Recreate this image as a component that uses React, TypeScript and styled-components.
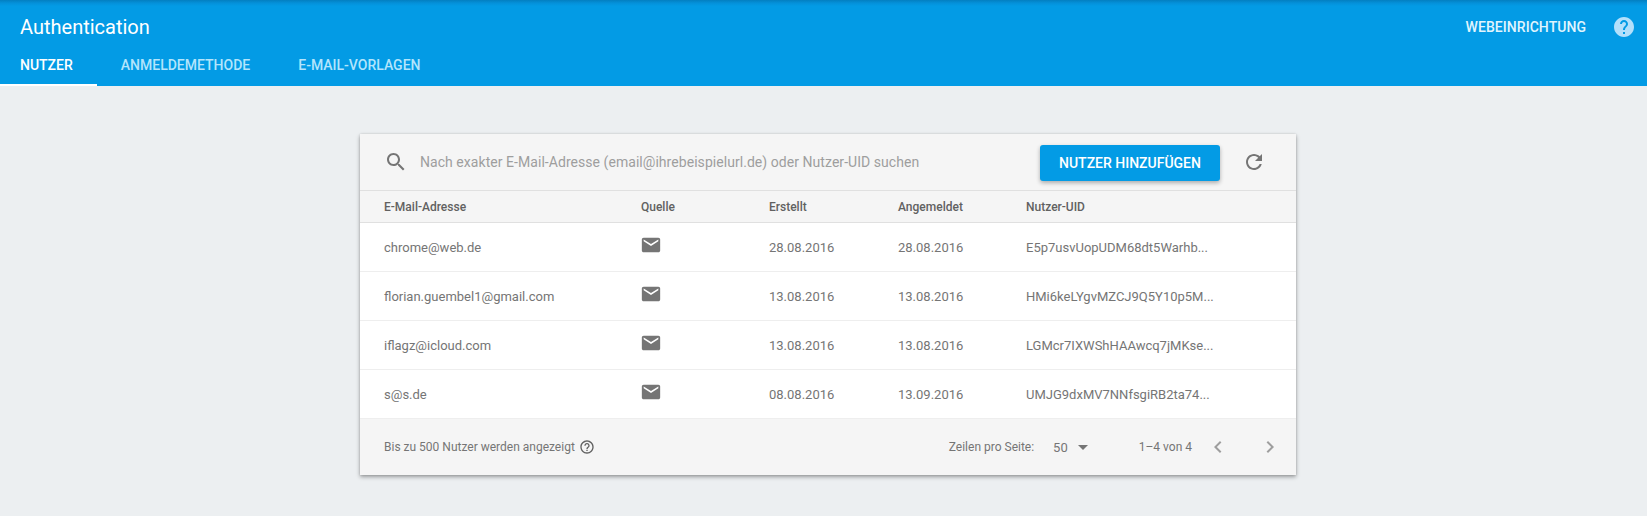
import React from "react";
import styled, { createGlobalStyle } from "styled-components";

const GlobalStyle = createGlobalStyle`
  html, body {
    margin: 0;
    padding: 0;
    background: #eceff1;
    font-family: Roboto, "Liberation Sans", sans-serif;
  }
`;

const Page = styled.div`
  width: 1647px;
  height: 516px;
  overflow: hidden;
`;

const Header = styled.header`
  height: 86px;
  box-sizing: border-box;
  background: linear-gradient(#037fc0 0, #0490d9 3px, #039be5 6px);
  display: flex;
  flex-direction: column;
  justify-content: space-between;
`;

const TopRow = styled.div`
  height: 48px;
  padding: 6px 11px 0 20px;
  box-sizing: border-box;
  display: flex;
  align-items: center;
  justify-content: space-between;
`;

const Title = styled.h1`
  margin: 0;
  font-size: 20px;
  font-weight: 400;
  color: #fff;
`;

const TopActions = styled.div`
  display: flex;
  align-items: center;
  gap: 26px;
`;

const SetupLink = styled.a`
  font-size: 14px;
  font-weight: 500;
  letter-spacing: 0.05px;
  color: #e1f5fe;
`;

const Tabs = styled.nav`
  display: flex;
`;

const Tab = styled.a<{ $active?: boolean }>`
  height: 38px;
  padding: 0 24px 2px ${(p) => (p.$active ? "20px" : "24px")};
  box-sizing: border-box;
  display: flex;
  align-items: center;
  font-size: 14px;
  font-weight: 500;
  color: ${(p) => (p.$active ? "#fff" : "#b3e5fc")};
  border-bottom: 2px solid ${(p) => (p.$active ? "#fff" : "transparent")};
`;

const Main = styled.main`
  display: flex;
  justify-content: center;
  padding-top: 48px;
  padding-left: 9px;
`;

const Card = styled.section`
  width: 936px;
  background: #fff;
  box-shadow: 0 2px 4px rgba(0, 0, 0, 0.35), 0 0 2px rgba(0, 0, 0, 0.12);
`;

const Toolbar = styled.div`
  height: 56px;
  background: #f5f5f5;
  display: flex;
  align-items: center;
  padding: 0 30px 0 24px;
  border-bottom: 1px solid #e0e0e0;
`;

const SearchText = styled.span`
  flex: 1;
  margin-left: 12px;
  font-size: 14px;
  letter-spacing: 0.05px;
  color: #9e9e9e;
`;

const AddButton = styled.button`
  width: 180px;
  height: 36px;
  margin-top: 2px;
  border: 0;
  border-radius: 3px;
  background: #039be5;
  color: #fff;
  font-family: inherit;
  font-size: 14px;
  font-weight: 500;
  box-shadow: 0 2px 4px rgba(0, 0, 0, 0.3);
`;

const RefreshSlot = styled.div`
  width: 24px;
  height: 24px;
  margin-left: 22px;
  display: flex;
`;

const columns = "257px 128px 129px 128px 1fr";

const HeadRow = styled.div`
  height: 31px;
  padding-left: 24px;
  background: #f5f5f5;
  border-bottom: 1px solid #e0e0e0;
  display: grid;
  grid-template-columns: ${columns};
  align-items: center;
  font-size: 12px;
  font-weight: 500;
  color: #616161;
`;

const Row = styled.div`
  height: 48px;
  padding-left: 24px;
  border-bottom: 1px solid #eeeeee;
  display: grid;
  grid-template-columns: ${columns};
  align-items: center;
  font-size: 13px;
  color: #757575;
`;

const MailCell = styled.div`
  display: flex;
  margin-top: -4px;
  margin-left: -1px;
`;

const Footer = styled.div`
  height: 56px;
  padding: 0 24px;
  background: #f5f5f5;
  display: flex;
  align-items: center;
  justify-content: space-between;
  font-size: 12px;
  color: #757575;
`;

const FooterNote = styled.div`
  display: flex;
  align-items: center;
  gap: 4px;
`;

const Pager = styled.div`
  display: flex;
  align-items: center;
`;

const PageSize = styled.span`
  margin-left: 19px;
  display: flex;
  align-items: center;
  gap: 3px;
  font-size: 13px;
`;

const PageRange = styled.span`
  margin-left: 44px;
  margin-right: 14px;
`;

const Chevron = styled.svg`
  display: block;
  margin-right: 28px;
  &:last-child {
    margin-right: -10px;
  }
`;

const users = [
  { mail: "chrome@web.de", created: "28.08.2016", login: "28.08.2016", uid: "E5p7usvUopUDM68dt5Warhb..." },
  { mail: "florian.guembel1@gmail.com", created: "13.08.2016", login: "13.08.2016", uid: "HMi6keLYgvMZCJ9Q5Y10p5M..." },
  { mail: "iflagz@icloud.com", created: "13.08.2016", login: "13.08.2016", uid: "LGMcr7IXWShHAAwcq7jMKse..." },
  { mail: "s@s.de", created: "08.08.2016", login: "13.09.2016", uid: "UMJG9dxMV7NNfsgiRB2ta74..." },
];

const MailIcon = () => (
  <svg width="22" height="22" viewBox="0 0 24 24" fill="#757575">
    <path d="M20 4H4c-1.1 0-2 .9-2 2v12c0 1.1.9 2 2 2h16c1.1 0 2-.9 2-2V6c0-1.1-.9-2-2-2zm0 4l-8 5-8-5V6l8 5 8-5v2z" />
  </svg>
);

const SearchIcon = () => (
  <svg width="24" height="24" viewBox="0 0 24 24" fill="#757575">
    <path d="M15.5 14h-.79l-.28-.27C15.41 12.59 16 11.11 16 9.5 16 5.91 13.09 3 9.5 3S3 5.91 3 9.5 5.91 16 9.5 16c1.61 0 3.09-.59 4.23-1.57l.27.28v.79l5 4.99L20.49 19l-4.99-5zm-6 0C7.01 14 5 11.99 5 9.5S7.01 5 9.5 5 14 7.01 14 9.5 11.99 14 9.5 14z" />
  </svg>
);

const RefreshIcon = () => (
  <svg width="24" height="24" viewBox="0 0 24 24" fill="#757575">
    <path d="M17.65 6.35C16.2 4.9 14.21 4 12 4c-4.42 0-7.99 3.58-7.99 8s3.57 8 7.99 8c3.73 0 6.84-2.55 7.73-6h-2.08c-.82 2.33-3.04 4-5.65 4-3.31 0-6-2.69-6-6s2.69-6 6-6c1.66 0 3.14.69 4.22 1.78L13 11h7V4l-2.35 2.35z" />
  </svg>
);

const HelpFilled = () => (
  <svg width="24" height="24" viewBox="0 0 24 24" fill="#b3e0fb">
    <path d="M12 2C6.48 2 2 6.48 2 12s4.48 10 10 10 10-4.48 10-10S17.52 2 12 2zm1 17h-2v-2h2v2zm2.07-7.75l-.9.92C13.45 12.9 13 13.5 13 15h-2v-.5c0-1.1.45-2.1 1.17-2.83l1.24-1.26c.37-.36.59-.86.59-1.41 0-1.1-.9-2-2-2s-2 .9-2 2H8c0-2.21 1.79-4 4-4s4 1.79 4 4c0 .88-.36 1.68-.93 2.25z" />
  </svg>
);

const HelpOutline = () => (
  <svg width="16" height="16" viewBox="0 0 24 24" fill="#616161">
    <path d="M11 18h2v-2h-2v2zm1-16C6.48 2 2 6.48 2 12s4.48 10 10 10 10-4.48 10-10S17.52 2 12 2zm0 18c-4.41 0-8-3.59-8-8s3.59-8 8-8 8 3.59 8 8-3.59 8-8 8zm0-14c-2.21 0-4 1.79-4 4h2c0-1.1.9-2 2-2s2 .9 2 2c0 2-3 1.75-3 5h2c0-2.25 3-2.5 3-5 0-2.21-1.79-4-4-4z" />
  </svg>
);

export default function App() {
  return (
    <Page>
      <GlobalStyle />
      <Header>
        <TopRow>
          <Title>Authentication</Title>
          <TopActions>
            <SetupLink>WEBEINRICHTUNG</SetupLink>
            <HelpFilled />
          </TopActions>
        </TopRow>
        <Tabs>
          <Tab $active>NUTZER</Tab>
          <Tab>ANMELDEMETHODE</Tab>
          <Tab>E-MAIL-VORLAGEN</Tab>
        </Tabs>
      </Header>
      <Main>
        <Card>
          <Toolbar>
            <SearchIcon />
            <SearchText>Nach exakter E-Mail-Adresse (email@ihrebeispielurl.de) oder Nutzer-UID suchen</SearchText>
            <AddButton>NUTZER HINZUFÜGEN</AddButton>
            <RefreshSlot>
              <RefreshIcon />
            </RefreshSlot>
          </Toolbar>
          <HeadRow>
            <span>E-Mail-Adresse</span>
            <span>Quelle</span>
            <span>Erstellt</span>
            <span>Angemeldet</span>
            <span>Nutzer-UID</span>
          </HeadRow>
          {users.map((u) => (
            <Row key={u.mail}>
              <span>{u.mail}</span>
              <MailCell>
                <MailIcon />
              </MailCell>
              <span>{u.created}</span>
              <span>{u.login}</span>
              <span>{u.uid}</span>
            </Row>
          ))}
          <Footer>
            <FooterNote>
              Bis zu 500 Nutzer werden angezeigt
              <HelpOutline />
            </FooterNote>
            <Pager>
              Zeilen pro Seite:
              <PageSize>
                50
                <svg width="24" height="24" viewBox="0 0 24 24" fill="#757575">
                  <path d="M7 10l5 5 5-5z" />
                </svg>
              </PageSize>
              <PageRange>1–4 von 4</PageRange>
              <Chevron width="24" height="24" viewBox="0 0 24 24" fill="#9e9e9e">
                <path d="M15.41 7.41L14 6l-6 6 6 6 1.41-1.41L10.83 12z" />
              </Chevron>
              <Chevron width="24" height="24" viewBox="0 0 24 24" fill="#9e9e9e">
                <path d="M10 6L8.59 7.41 13.17 12l-4.58 4.59L10 18l6-6z" />
              </Chevron>
            </Pager>
          </Footer>
        </Card>
      </Main>
    </Page>
  );
}
